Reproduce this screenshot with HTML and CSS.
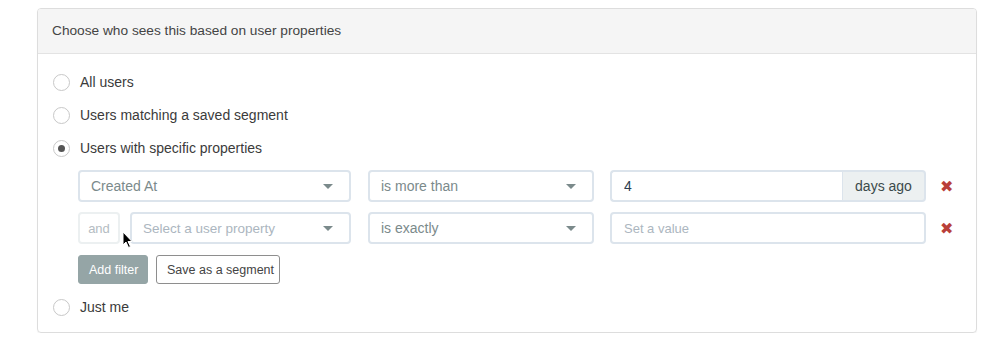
FILE: index.html
```html
<!DOCTYPE html>
<html lang="en">

<head>
  <meta charset="UTF-8">
  <meta name="viewport" content="width=device-width, initial-scale=1.0">
  <title>Audience</title>
  <link rel="stylesheet" href="styles.css">
</head>

<body>
  <div class="panel">
    <div class="panel-heading">Choose who sees this based on user properties</div>
    <div class="panel-body">

      <label class="radio-row">
        <span class="radio"></span>
        <span>All users</span>
      </label>
      <label class="radio-row">
        <span class="radio"></span>
        <span>Users matching a saved segment</span>
      </label>
      <label class="radio-row">
        <span class="radio checked"></span>
        <span>Users with specific properties</span>
      </label>

      <div class="filters">
        <div class="filter-row">
          <div class="col-prop">
            <div class="select"><span>Created At</span></div>
          </div>
          <div class="col-op">
            <div class="select"><span>is more than</span></div>
          </div>
          <div class="col-value input-group">
            <input type="text" value="4">
            <span class="addon">days ago</span>
          </div>
          <span class="remove">&#10006;</span>
        </div>

        <div class="filter-row">
          <div class="col-prop">
            <span class="and">and</span>
            <div class="select placeholder"><span>Select a user property</span></div>
            <svg class="cursor" width="13" height="18" viewBox="0 0 13 18">
              <path d="M1 1 L1 14 L4 11 L6.5 16.5 L8.5 15.5 L6 10.5 L10 10.5 Z" fill="#000" stroke="#fff" stroke-width="1"/>
            </svg>
          </div>
          <div class="col-op">
            <div class="select"><span>is exactly</span></div>
          </div>
          <div class="col-value">
            <input type="text" placeholder="Set a value">
          </div>
          <span class="remove">&#10006;</span>
        </div>

        <div class="filter-actions">
          <button class="btn-add">Add filter</button>
          <button class="btn-save">Save as a segment</button>
        </div>
      </div>

      <label class="radio-row">
        <span class="radio"></span>
        <span>Just me</span>
      </label>

    </div>
  </div>
</body>

</html>
```

FILE: styles.css
```css
* {
  margin: 0;
  padding: 0;
  box-sizing: border-box;
}

body {
  font-family: 'Liberation Sans', Arial, sans-serif;
  font-size: 14px;
  color: #3b3b3b;
  background: #fff;
  padding: 8px 0 0 37px;
}

.panel {
  width: 940px;
  border: 1px solid #dddddd;
  border-radius: 4px;
  box-shadow: 0 1px 1px rgba(0, 0, 0, 0.05);
}

.panel-heading {
  height: 45px;
  line-height: 44px;
  padding-left: 14px;
  background: #f5f5f5;
  border-bottom: 1px solid #e3e3e3;
  border-radius: 3px 3px 0 0;
  color: #444;
  font-size: 13.7px;
}

.panel-body {
  padding: 18px 15px 15px 15px;
}

.radio-row {
  display: flex;
  align-items: center;
  height: 20px;
  margin-bottom: 13px;
  gap: 10px;
}

.radio-row:last-child {
  margin-bottom: 0;
}

.radio {
  width: 17px;
  height: 17px;
  border: 1px solid #c8c8c8;
  border-radius: 50%;
  background: #fff;
  display: flex;
  align-items: center;
  justify-content: center;
}

.radio.checked::after {
  content: "";
  width: 7px;
  height: 7px;
  border-radius: 50%;
  background: #555;
}

.filters {
  margin: -1px 0 13px 25px;
}

.filter-row {
  display: flex;
  align-items: center;
  height: 32px;
  margin-bottom: 10px;
}

.col-prop {
  position: relative;
  width: 273px;
  display: flex;
  gap: 10px;
  height: 100%;
}

.col-op {
  width: 226px;
  margin-left: 17px;
  height: 100%;
}

.col-value {
  width: 316px;
  margin-left: 16px;
  height: 100%;
  display: flex;
}

.select {
  flex: 1;
  height: 100%;
  border: 2px solid #dce4ec;
  border-radius: 4px;
  display: flex;
  align-items: center;
  padding: 0 11px;
  color: #7b8a8b;
  position: relative;
  white-space: nowrap;
}

.select::after {
  content: "";
  position: absolute;
  right: 16px;
  top: 12px;
  border-left: 5px solid transparent;
  border-right: 5px solid transparent;
  border-top: 5px solid #7b8a8b;
}

.select.placeholder {
  color: #acb6c0;
  font-size: 13.5px;
}

.and {
  width: 42px;
  height: 100%;
  border: 2px solid #ecf0f1;
  border-radius: 4px;
  display: flex;
  align-items: center;
  justify-content: center;
  color: #b4bcc2;
  font-size: 13px;
}

.cursor {
  position: absolute;
  left: 44px;
  top: 19px;
}

input {
  flex: 1;
  width: 100%;
  height: 100%;
  border: 2px solid #dce4ec;
  border-radius: 4px;
  padding: 0 12px;
  font-family: inherit;
  font-size: 13px;
  color: #2c3e50;
  outline: none;
}

input::placeholder {
  color: #acb6c0;
}

.input-group input {
  border-radius: 4px 0 0 4px;
  border-right: none;
  font-size: 14px;
}

.addon {
  width: 84px;
  height: 100%;
  display: flex;
  align-items: center;
  justify-content: center;
  background: #ecf0f1;
  border: 2px solid #dce4ec;
  border-left: 1px solid #dce4ec;
  border-radius: 0 4px 4px 0;
  color: #3b4a4b;
}

.remove {
  margin-left: 14px;
  color: #b9403a;
  font-family: 'DejaVu Sans', sans-serif;
  font-size: 16px;
  font-weight: bold;
}

.filter-actions {
  display: flex;
  gap: 8px;
  padding-top: 1px;
}

.filter-actions button {
  height: 29px;
  border-radius: 3px;
  font-family: inherit;
  font-size: 12.5px;
  padding: 0 10px;
  white-space: nowrap;
  cursor: pointer;
}

.btn-add {
  width: 70px;
  background: #95a5a6;
  border: 1px solid #95a5a6;
  color: #fff;
}

.btn-save {
  width: 124px;
  background: #fff;
  border: 1px solid #8e8e8e;
  color: #444;
}
```
